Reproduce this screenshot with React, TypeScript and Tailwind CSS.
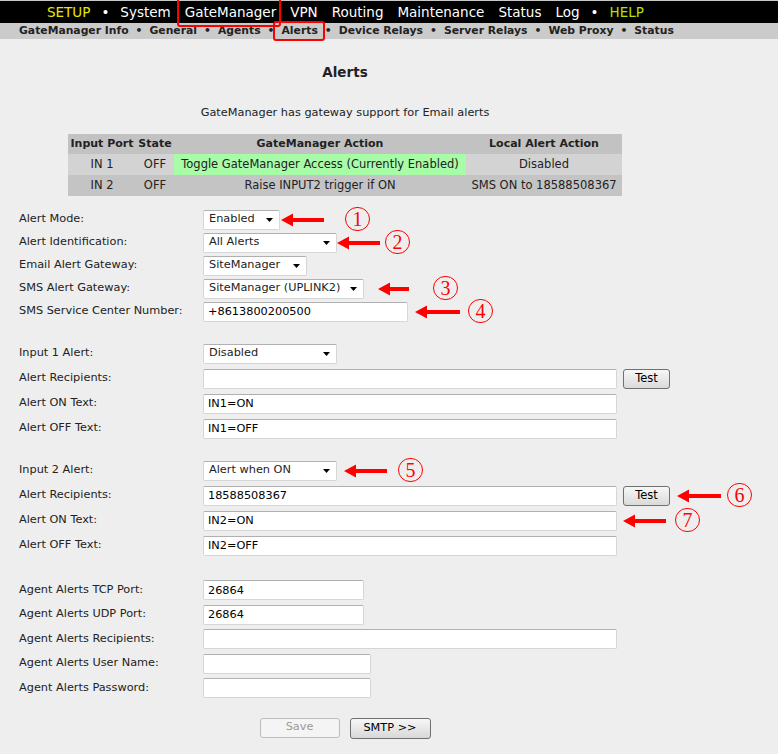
import React from "react";

const topMenu = ["System", "GateManager", "VPN", "Routing", "Maintenance", "Status", "Log"];
const subMenu = ["GateManager Info", "General", "Agents", "Alerts", "Device Relays", "Server Relays", "Web Proxy", "Status"];

function Arrow({ w }: { w: number }) {
  return (
    <svg width={w} height={14} viewBox={`0 0 ${w} 14`} className="shrink-0">
      <polygon points="0,7 12,0.5 12,13.5" fill="#f00" />
      <rect x={11} y={5} width={w - 11} height={4} fill="#f00" />
    </svg>
  );
}

function Num({ n }: { n: number }) {
  return (
    <span className="inline-flex h-[24px] w-[25px] shrink-0 items-center justify-center rounded-full border-[1.5px] border-[#f00] font-['Liberation_Serif',serif] text-[20px] leading-none text-[#f00]">
      {n}
    </span>
  );
}

function Select({ w, value }: { w: number; value: string }) {
  return (
    <div
      style={{ width: w }}
      className="flex h-[20px] shrink-0 items-center justify-between rounded-[2px] border border-[#d6d6d6] border-t-[#b0b0b0] bg-white pl-[5px] pr-[6px]"
    >
      <span>{value}</span>
      <svg width="7" height="4" viewBox="0 0 7 4">
        <polygon points="0,0 7,0 3.5,4" fill="#000" />
      </svg>
    </div>
  );
}

function Field({ w, value = "" }: { w: number; value?: string }) {
  return (
    <input
      readOnly
      value={value}
      style={{ width: w }}
      className="h-[20px] shrink-0 rounded-[2px] border border-[#d6d6d6] border-t-[#b0b0b0] bg-white px-[4px] text-[11.3px] text-black outline-none"
    />
  );
}

function TestButton() {
  return (
    <button className="ml-[6px] h-[20px] w-[47px] rounded-[3px] border border-[#707070] bg-gradient-to-b from-[#f7f7f7] to-[#dadada] text-[11.5px] text-black">
      Test
    </button>
  );
}

function Row({ label, h, children }: { label: string; h: string; children: React.ReactNode }) {
  return (
    <div className={`flex items-center ${h}`}>
      <div className="w-[184px] shrink-0">{label}</div>
      {children}
    </div>
  );
}

export default function App() {
  return (
    <div className="min-h-[754px] w-[778px] bg-[#eeeeee] font-['DejaVu_Sans',Verdana,sans-serif] text-[11.3px] text-[#222]">
      {/* top menu */}
      <div className="flex h-[23px] items-center gap-[14px] border-t border-[#c8c8c8] bg-black pl-[47px] text-[13.5px] text-white">
        <span className="text-[#e8e800]">SETUP</span>
        <span className="-mx-[3px]">•</span>
        {topMenu.map((m) =>
          m === "GateManager" ? (
            <span key={m} className="relative">
              {m}
              <span className="absolute -top-[5px] -bottom-[5px] -left-[8px] -right-[5px] rounded-[3px] border-2 border-[#f00]" />
            </span>
          ) : (
            <span key={m}>{m}</span>
          )
        )}
        <span className="-mx-[3px]">•</span>
        <span className="text-[#b8e000]">HELP</span>
      </div>

      {/* sub menu */}
      <div className="flex h-[16px] items-center gap-[9px] bg-[#cbcbcb] pl-[19px] text-[10.8px] font-bold text-[#222]">
        {subMenu.map((m, i) => (
          <React.Fragment key={m}>
            {i > 0 && <span className="-mx-[2px]">•</span>}
            {m === "Alerts" ? (
              <span className="relative">
                {m}
                <span className="absolute -top-[2px] -bottom-[2px] -left-[9px] -right-[7px] rounded-[3px] border-2 border-[#f00]" />
              </span>
            ) : (
              <span>{m}</span>
            )}
          </React.Fragment>
        ))}
      </div>

      {/* heading block */}
      <div className="w-[690px] text-center">
        <h1 className="pt-[25px] text-[13.5px] font-bold leading-[16px] text-[#222]">Alerts</h1>
        <p className="pt-[26px] leading-[14px]">GateManager has gateway support for Email alerts</p>
        <table className="mx-auto mt-[14px] w-[554px] table-fixed border-collapse text-[11.5px]">
          <colgroup>
            <col className="w-[68px]" />
            <col className="w-[38px]" />
            <col className="w-[292px]" />
            <col className="w-[156px]" />
          </colgroup>
          <thead>
            <tr className="h-[20px] bg-[#c2c2c2] text-[11px] font-bold">
              <th className="text-center">Input Port</th>
              <th className="text-center">State</th>
              <th className="text-center">GateManager Action</th>
              <th className="text-center">Local Alert Action</th>
            </tr>
          </thead>
          <tbody>
            <tr className="h-[21px] bg-[#d3d3d3]">
              <td>IN 1</td>
              <td>OFF</td>
              <td className="bg-[#a8fca8]">Toggle GateManager Access (Currently Enabled)</td>
              <td>Disabled</td>
            </tr>
            <tr className="h-[21px] bg-[#c4c4c4]">
              <td>IN 2</td>
              <td>OFF</td>
              <td>Raise INPUT2 trigger if ON</td>
              <td>SMS ON to 18588508367</td>
            </tr>
          </tbody>
        </table>
      </div>

      {/* form */}
      <div className="pl-[19px]">
        <div className="mt-[12px]">
          <Row label="Alert Mode:" h="h-[23px]">
            <Select w={77} value="Enabled" />
            <span className="ml-[1px]"><Arrow w={43} /></span>
            <span className="ml-[21px]"><Num n={1} /></span>
          </Row>
          <Row label="Alert Identification:" h="h-[23px]">
            <Select w={134} value="All Alerts" />
            <Arrow w={43} />
            <span className="ml-[5px]"><Num n={2} /></span>
          </Row>
          <Row label="Email Alert Gateway:" h="h-[23px]">
            <Select w={104} value="SiteManager" />
          </Row>
          <Row label="SMS Alert Gateway:" h="h-[23px]">
            <Select w={161} value="SiteManager (UPLINK2)" />
            <span className="ml-[14px]"><Arrow w={31} /></span>
            <span className="ml-[24px]"><Num n={3} /></span>
          </Row>
          <Row label="SMS Service Center Number:" h="h-[23px]">
            <Field w={205} value="+8613800200500" />
            <span className="ml-[7px]"><Arrow w={45} /></span>
            <span className="ml-[8px]"><Num n={4} /></span>
          </Row>
        </div>

        <div className="mt-[18px]">
          <Row label="Input 1 Alert:" h="h-[25px]">
            <Select w={134} value="Disabled" />
          </Row>
          <Row label="Alert Recipients:" h="h-[25px]">
            <Field w={414} />
            <TestButton />
          </Row>
          <Row label="Alert ON Text:" h="h-[25px]">
            <Field w={414} value="IN1=ON" />
          </Row>
          <Row label="Alert OFF Text:" h="h-[25px]">
            <Field w={414} value="IN1=OFF" />
          </Row>
        </div>

        <div className="mt-[17px]">
          <Row label="Input 2 Alert:" h="h-[25px]">
            <Select w={134} value="Alert when ON" />
            <span className="ml-[7px]"><Arrow w={43} /></span>
            <span className="ml-[11px]"><Num n={5} /></span>
          </Row>
          <Row label="Alert Recipients:" h="h-[25px]">
            <Field w={414} value="18588508367" />
            <TestButton />
            <span className="ml-[7px]"><Arrow w={44} /></span>
            <span className="ml-[6px]"><Num n={6} /></span>
          </Row>
          <Row label="Alert ON Text:" h="h-[25px]">
            <Field w={414} value="IN2=ON" />
            <span className="ml-[6px]"><Arrow w={43} /></span>
            <span className="ml-[9px]"><Num n={7} /></span>
          </Row>
          <Row label="Alert OFF Text:" h="h-[25px]">
            <Field w={414} value="IN2=OFF" />
          </Row>
        </div>

        <div className="mt-[20px]">
          <Row label="Agent Alerts TCP Port:" h="h-[24.5px]">
            <Field w={161} value="26864" />
          </Row>
          <Row label="Agent Alerts UDP Port:" h="h-[24.5px]">
            <Field w={161} value="26864" />
          </Row>
          <Row label="Agent Alerts Recipients:" h="h-[24.5px]">
            <Field w={414} />
          </Row>
          <Row label="Agent Alerts User Name:" h="h-[24.5px]">
            <Field w={168} />
          </Row>
          <Row label="Agent Alerts Password:" h="h-[24.5px]">
            <Field w={168} />
          </Row>
        </div>
      </div>

      <div className="mt-[17px] flex w-[690px] justify-center gap-[10px] pb-[16px]">
        <button className="h-[20px] w-[80px] rounded-[3px] border border-[#bcbcbc] bg-[#f4f4f4] text-[11.3px] text-[#9a9a9a]">
          Save
        </button>
        <button className="h-[21px] w-[81px] rounded-[3px] border border-[#707070] bg-gradient-to-b from-[#f7f7f7] to-[#d8d8d8] text-[11.3px] text-black">
          SMTP &gt;&gt;
        </button>
      </div>
    </div>
  );
}
